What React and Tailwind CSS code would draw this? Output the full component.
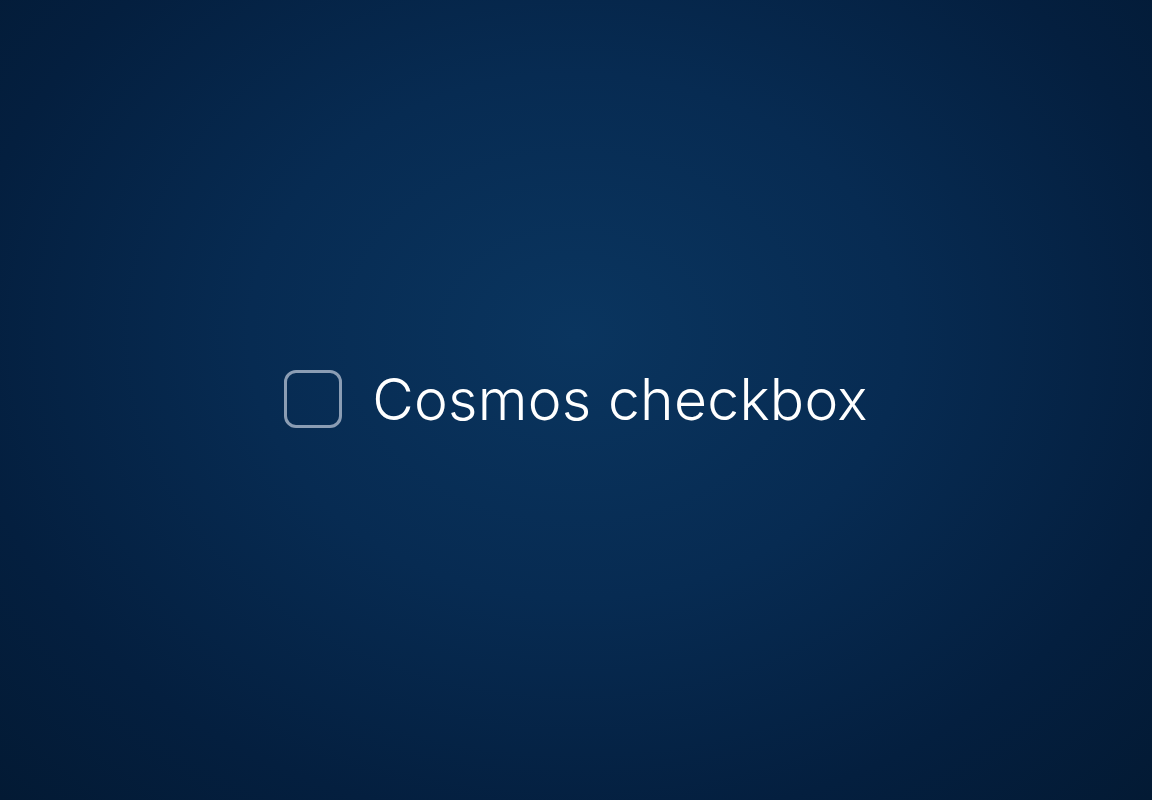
export default function App() {
  return (
    <div className="w-[1152px] h-[800px] flex items-center justify-center bg-[radial-gradient(ellipse_at_50%_42%,#0a355f_0%,#072b52_40%,#041f3f_75%,#031a34_100%)]">
      <label className="flex items-center gap-[30px] mt-[-2px]">
        <span className="w-[58px] h-[58px] rounded-[12px] border-[3px] border-[#8b9db4] box-border"></span>
        <span className="text-white text-[57px] leading-none font-light font-['Inter',sans-serif] tracking-[0.3px]">Cosmos checkbox</span>
      </label>
    </div>
  );
}
